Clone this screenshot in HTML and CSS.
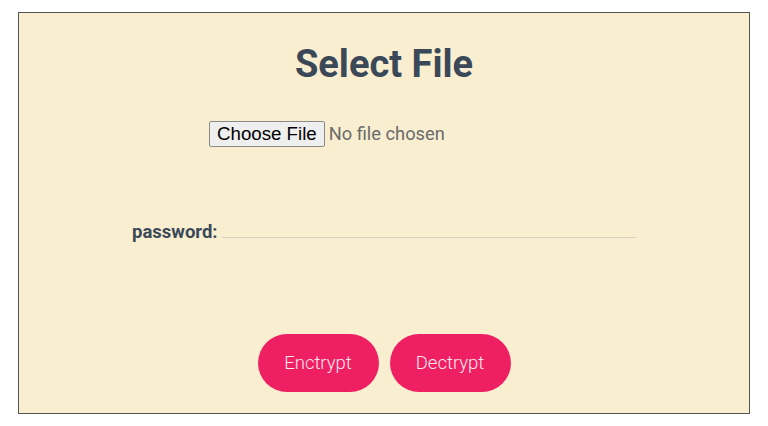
FILE: index.html
```html
<!DOCTYPE html>
<html>
<head>
<meta charset="utf-8">
<link rel="stylesheet" href="styles.css">
</head>
<body>
<div class="card">
  <h1 class="title">Select File</h1>
  <div class="form">
    <div class="file-row">
      <input type="file" class="file">
    </div>
    <div class="pw-row">
      <label class="pw-label">password:</label>
      <input type="password" class="pw-input">
    </div>
    <div class="actions">
      <button class="btn">Enctrypt</button>
      <button class="btn">Dectrypt</button>
    </div>
  </div>
</div>
</body>
</html>
```
FILE: styles.css
```css
html, body {
  margin: 0;
  padding: 0;
  background: #ffffff;
}
body {
  font-family: Roboto, "Liberation Sans", sans-serif;
  padding: 12px 18px 0 18px;
}
.card {
  height: 400px;
  border: 1px solid #555;
  background: #f9efd0;
  box-sizing: content-box;
  display: flex;
  flex-direction: column;
  align-items: center;
}
.title {
  margin: 29px 0 0 0;
  font-size: 38px;
  font-weight: 700;
  color: #3a4858;
  line-height: 44px;
}
.form {
  width: 504px;
  display: flex;
  flex-direction: column;
}
.file-row {
  margin-top: 35px;
  display: flex;
  justify-content: center;
}
.file {
  width: 350px;
  font-family: Roboto, sans-serif;
  font-size: 18.3px;
  color: #6b6b6b;
}
.file::file-selector-button {
  font-family: "Liberation Sans", Arial, sans-serif;
  font-size: 18.7px;
  color: #000;
  padding: 0 7px;
  height: 26px;
  margin-right: 4px;
  border: 1px solid #8a8a8a;
  border-radius: 2px;
  background: #efefef;
}
.pw-row {
  margin-top: 75px;
  display: flex;
  align-items: flex-end;
  gap: 4px;
}
.pw-label {
  font-size: 18.5px;
  line-height: 20px;
  font-weight: 700;
  color: #3a4858;
}
.pw-input {
  flex: 1;
  border: none;
  border-bottom: 1px solid #d4d2c6;
  background: transparent;
  font-size: 14px;
  padding: 0;
  height: 10px;
  margin-bottom: 4px;
  outline: none;
}
.actions {
  margin-top: 92px;
  display: flex;
  justify-content: center;
  gap: 11px;
}
.btn {
  height: 58px;
  width: 121px;
  border: none;
  border-radius: 29px;
  background: #ef1f63;
  color: #fde8ef;
  font-family: Roboto, sans-serif;
  font-weight: 300;
  font-size: 18.5px;
}
```
